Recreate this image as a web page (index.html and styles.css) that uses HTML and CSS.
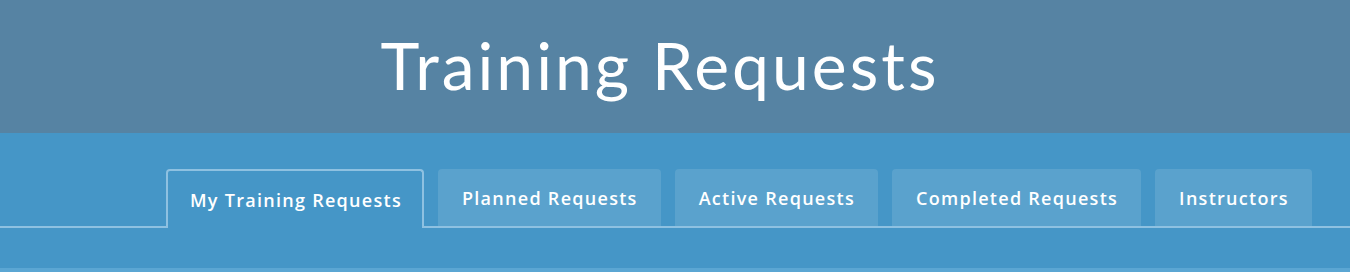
FILE: index.html
```html
<!DOCTYPE html>
<html lang="en">
<head>
<meta charset="utf-8">
<title>Training Requests</title>
<link rel="stylesheet" href="styles.css">
</head>
<body>
<header class="page-header">
  <h1 class="page-title">Training Requests</h1>
</header>
<nav class="tabs-bar">
  <ul class="tabs">
    <li class="tab tab-active">My Training Requests</li>
    <li class="tab">Planned Requests</li>
    <li class="tab">Active Requests</li>
    <li class="tab">Completed Requests</li>
    <li class="tab">Instructors</li>
  </ul>
</nav>
<div class="bottom-strip"></div>
</body>
</html>
```
FILE: styles.css
```css
* { box-sizing: border-box; }
html, body { margin: 0; padding: 0; }
body {
  font-family: Lato, "Open Sans", sans-serif;
  background: #4596c7;
  color: #fff;
  width: 1350px;
  height: 272px;
  overflow: hidden;
}
.page-header {
  height: 133px;
  background: #5683a3;
  display: flex;
  align-items: center;
  justify-content: center;
  padding-right: 30px;
}
.page-title {
  margin: 0;
  font-weight: 400;
  font-size: 66px;
  line-height: 1;
  padding-bottom: 4px;
  letter-spacing: 3px;
}
.tabs-bar {
  height: 135px;
  padding-top: 36px;
  background: #4596c7;
}
.tabs {
  list-style: none;
  margin: 0;
  padding: 0 0 0 166px;
  display: flex;
  gap: 14px;
  height: 59px;
  border-bottom: 2px solid #8ec1e1;
}
.tab {
  height: 57px;
  padding: 0 23px 0 24px;
  display: flex;
  align-items: center;
  background: #5aa2cd;
  border-radius: 4px 4px 0 0;
  font-family: "Open Sans", Lato, sans-serif;
  font-size: 18px;
  font-weight: 600;
  letter-spacing: 1.28px;
}
.tab-active {
  height: 59px;
  margin-bottom: -2px;
  background: #4596c7;
  border: 2px solid #8ec1e1;
  border-bottom: none;
  padding: 0 20px 0 22px;
}
.bottom-strip {
  height: 4px;
  background: #5ba6d3;
}
```
